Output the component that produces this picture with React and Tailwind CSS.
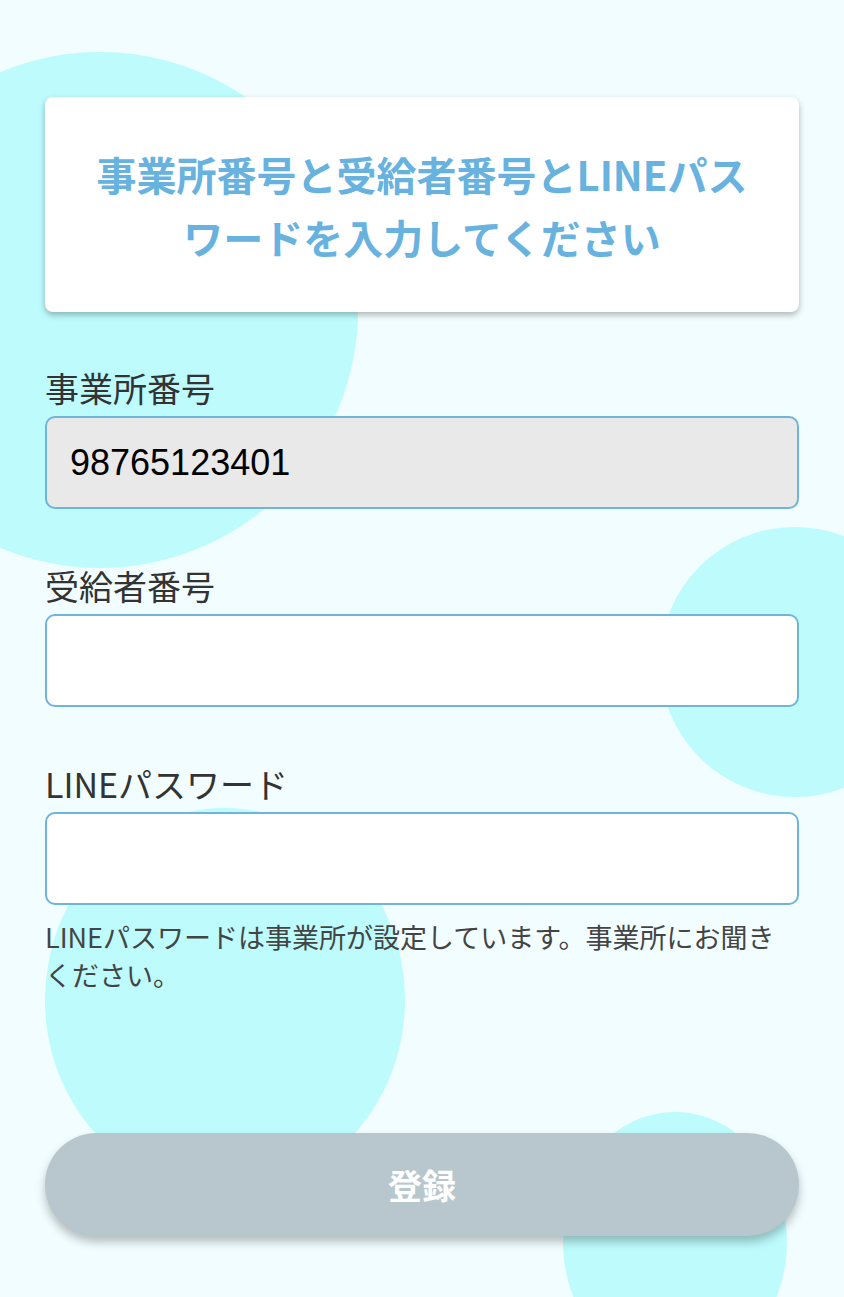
import React from 'react';

const jp = { fontFamily: '"Noto Sans CJK JP", "Noto Sans", sans-serif' };

const Field = ({ label, value, disabled }) => (
    <div className="flex flex-col">
        <label className="text-[34px] leading-[48px] text-[#333] mb-1">{label}</label>
        <input
            type="text"
            defaultValue={value}
            disabled={disabled}
            className={`h-[93px] w-full rounded-[10px] border-2 border-[#6fb4da] px-[23px] text-[36px] text-black outline-none ${
                disabled ? 'bg-[#e9e9e9]' : 'bg-white'
            }`}
            style={{ fontFamily: '"Liberation Sans", Arial, sans-serif' }}
        />
    </div>
);

export default function App() {
    return (
        <div className="relative min-h-[1297px] w-full overflow-hidden bg-[#f1fdfe]" style={jp}>
            {/* Background bubbles */}
            <div className="absolute left-[-158px] top-[52px] h-[516px] w-[516px] rounded-full bg-[#bdfbfc]" />
            <div className="absolute left-[660px] top-[527px] h-[270px] w-[270px] rounded-full bg-[#bdfbfc]" />
            <div className="absolute left-[45px] top-[808px] h-[384px] w-[360px] rounded-[50%] bg-[#bdfbfc]" />
            <div className="absolute left-[563px] top-[1112px] h-[260px] w-[224px] rounded-[50%] bg-[#bdfbfc]" />

            <div className="relative flex flex-col px-[45px] pt-[97px]">
                {/* Heading card */}
                <div className="rounded-lg bg-white px-[40px] pt-[46px] pb-[43px] shadow-[0_3px_6px_rgba(0,0,0,0.28)]">
                    <h1 className="text-center text-[40px] font-bold leading-[63px] text-[#67b2de]">
                        事業所番号と受給者番号とLINEパスワードを入力してください
                    </h1>
                </div>

                {/* Form */}
                <div className="mt-[52px] flex flex-col gap-[53px]">
                    <Field label="事業所番号" value="98765123401" disabled />
                    <Field label="受給者番号" value="" />
                    <div className="flex flex-col">
                        <Field label="LINEパスワード" value="" />
                        <p className="mt-[13px] pr-[18px] text-[27px] leading-[38px] text-[#444]">
                            LINEパスワードは事業所が設定しています。事業所にお聞きください。
                        </p>
                    </div>
                </div>

                {/* Submit */}
                <button
                    type="button"
                    className="mt-[139px] h-[103px] w-full rounded-full bg-[#b8c6cd] text-[34px] font-bold text-white shadow-[0_6px_10px_rgba(0,0,0,0.25)]"
                >
                    登録
                </button>
            </div>
        </div>
    );
}
